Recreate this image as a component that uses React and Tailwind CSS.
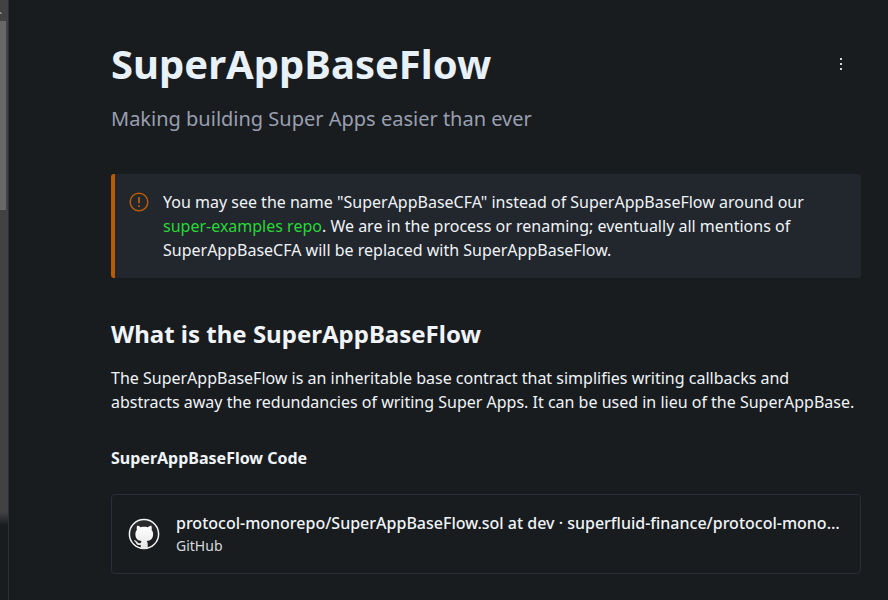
function GithubMark() {
  return (
    <svg className="shrink-0" width="32" height="32" viewBox="0 0 32 32">
      <defs>
        <linearGradient id="disc" x1="0" y1="0" x2="0" y2="1"><stop offset="0" stopColor="#2d2d30" /><stop offset="1" stopColor="#17181b" /></linearGradient>
        <linearGradient id="cat" x1="0" y1="0" x2="0" y2="1"><stop offset="0" stopColor="#ffffff" /><stop offset="1" stopColor="#e4e3e4" /></linearGradient>
      </defs>
      <circle cx="16" cy="16" r="14.6" fill="url(#disc)" stroke="#f4f4f4" strokeWidth="1.5" />
      <path d="M12.7 30.4v-3.5c-3.1.5-4.1-.8-4.7-2-.5-.9-1-1.5-1.8-2-.5-.4 0-.7.5-.6 1.3.1 2 1 2.6 1.8 1 1.3 2.2 1.3 3.4.9.1-.8.5-1.5 1-1.9-3.8-.5-6.3-2.1-6.3-7.1 0-1.8.6-3.2 1.5-4.3-.3-.8-.3-2.4.2-4 1.3 0 2.7.7 3.8 1.5 2.2-.5 4.5-.5 6.7 0 1.1-.8 2.5-1.5 3.8-1.5.5 1.6.5 3.2.2 4 .9 1.1 1.5 2.5 1.5 4.3 0 5-2.6 6.6-6.4 7.1.7.7 1 1.6 1 2.8v4.5c-2.4.6-4.6.6-7 0z" fill="url(#cat)" />
    </svg>
  );
}

export default function App() {
  return (
    <div className="flex h-[600px] w-[888px] overflow-hidden bg-[#181c1f] font-['Noto_Sans',sans-serif] text-[#f0f4f8]">
      <div className="flex w-[9px] shrink-0 flex-col border-r border-[#2b2d38]">
        <div className="flex h-[21px] items-end bg-[#424242] pb-[7px]">
          <svg width="2" height="2" viewBox="0 0 2 2" fill="#8a8a8a"><path d="M0 0h1v1h1v1H0z" /></svg>
        </div>
        <div className="h-[189px] bg-[#424242]"><div className="h-full w-[6px] bg-[#686868]" /></div>
        <div className="h-[302px] bg-[#424242]" />
        <div className="h-[14px] bg-linear-to-b from-[#424242] to-[#181c1f]" />
      </div>
      <main className="ml-[102px] w-[750px]">
        <header className="flex items-start justify-between pt-[39px]">
          <h1 className="text-[40px] leading-[50px] font-bold text-[#e8f0f8]">SuperAppBaseFlow</h1>
          <svg className="mt-[17px] mr-[12px]" width="16" height="16" viewBox="0 0 16 16" fill="#d3d6d9"><path d="M7 2h2v2H7zM7 7h2v2H7zM7 12h2v2H7z" /></svg>
        </header>
        <p className="mt-[14px] text-[20px] leading-[32px] text-[#9a9fb0]">Making building Super Apps easier than ever</p>
        <section className="mt-[39px] flex h-[104px] rounded-[3px] border-l-4 border-[#b95c00] bg-[#22262d] pt-4 pl-[14px]">
          <svg className="mt-[2px] shrink-0" width="20" height="20" viewBox="0 0 20 20" fill="none" stroke="#b95c00" strokeWidth="1.5"><circle cx="10" cy="10" r="8.8" /><path d="M10 5v6.2M10 13.2v1.7" strokeWidth="1.8" /></svg>
          <p className="ml-[14px] text-[16px] leading-6 whitespace-nowrap">You may see the name "SuperAppBaseCFA" instead of SuperAppBaseFlow around our<br /><a className="text-[#28d837]">super-examples repo</a>. We are in the process or renaming; eventually all mentions of<br />SuperAppBaseCFA will be replaced with SuperAppBaseFlow.</p>
        </section>
        <h2 className="mt-[40px] text-[24px] leading-8 font-bold">What is the SuperAppBaseFlow</h2>
        <p className="mt-4 text-[16px] leading-6 whitespace-nowrap">The SuperAppBaseFlow is an inheritable base contract that simplifies writing callbacks and<br />abstracts away the redundancies of writing Super Apps. It can be used in lieu of the SuperAppBase.</p>
        <h3 className="mt-8 text-[16px] leading-6 font-bold">SuperAppBaseFlow Code</h3>
        <a className="mt-6 flex h-[80px] items-center rounded-[4px] border border-[#2b2d38] px-4">
          <GithubMark />
          <div className="ml-4 min-w-0 flex-1">
            <div className="-mt-px mb-px text-[16px] leading-6 font-medium whitespace-nowrap">protocol-monorepo/SuperAppBaseFlow.sol at dev · superfluid-finance/protocol-mono…</div>
            <div className="text-[14px] leading-5 text-[#d5d9dd]">GitHub</div>
          </div>
        </a>
      </main>
    </div>
  );
}
